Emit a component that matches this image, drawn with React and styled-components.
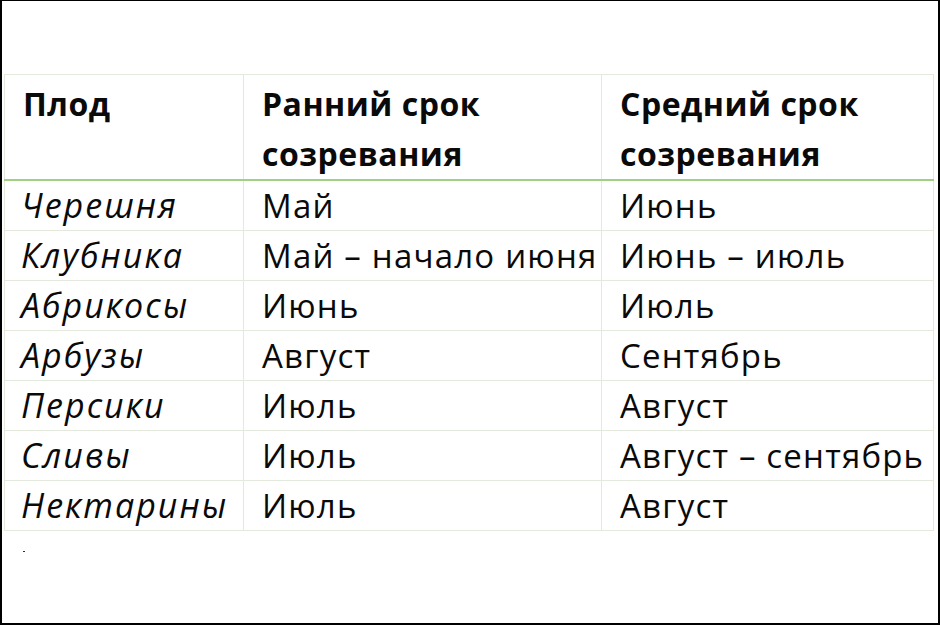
import React from "react";
import styled, { createGlobalStyle } from "styled-components";

const Global = createGlobalStyle`
  html, body { margin: 0; padding: 0; background: #fff; }
  body { width: 940px; height: 626px; overflow: hidden; }
  #root { width: 940px; height: 626px; }
`;

const Frame = styled.div`
  box-sizing: border-box;
  width: 940px;
  height: 625px;
  border-top: 1px solid #000;
  border-left: 2px solid #000;
  border-right: 2px solid #000;
  border-bottom: 2px solid #000;
  padding: 73px 0 0 2px;
  background: #fff;
  font-family: "Open Sans", Lato, sans-serif;
  color: #0a0a0a;
`;

const Table = styled.table`
  border-collapse: collapse;
  table-layout: fixed;
  width: 929px;
`;

const HeadCell = styled.th`
  text-align: left;
  vertical-align: top;
  font-weight: 700;
  font-size: 32px;
  letter-spacing: 0.5px;
  line-height: 50px;
  padding: 4px 10px 0 18px;
  height: 100px;
  box-sizing: border-box;
  border: 1px solid #e3e9dc;
  border-bottom: 2px solid #9fd083;
`;

const Cell = styled.td`
  font-size: ${(p) => (p.$italic ? 34 : 33)}px;
  letter-spacing: ${(p) => (p.$italic ? 2 : 1.2)}px;
  line-height: 49px;
  padding: 0 0 0 ${(p) => (p.$italic ? 16 : 18)}px;
  height: 50px;
  box-sizing: border-box;
  white-space: nowrap;
  border: 1px solid #e3e9dc;
  font-style: ${(p) => (p.$italic ? "italic" : "normal")};
`;

const Dot = styled.div`
  margin: 20px 0 0 19px;
  width: 2px;
  height: 1px;
  background: #333;
`;

const rows = [
  ["Черешня", "Май", "Июнь"],
  ["Клубника", "Май – начало июня", "Июнь – июль"],
  ["Абрикосы", "Июнь", "Июль"],
  ["Арбузы", "Август", "Сентябрь"],
  ["Персики", "Июль", "Август"],
  ["Сливы", "Июль", "Август – сентябрь"],
  ["Нектарины", "Июль", "Август"],
];

export default function App() {
  return (
    <>
      <Global />
      <Frame>
        <Table>
          <colgroup>
            <col style={{ width: 239 }} />
            <col style={{ width: 358 }} />
            <col style={{ width: 332 }} />
          </colgroup>
          <thead>
            <tr>
              <HeadCell>Плод</HeadCell>
              <HeadCell>
                Ранний срок
                <br />
                созревания
              </HeadCell>
              <HeadCell>
                Средний срок
                <br />
                созревания
              </HeadCell>
            </tr>
          </thead>
          <tbody>
            {rows.map((r) => (
              <tr key={r[0]}>
                <Cell $italic>{r[0]}</Cell>
                <Cell>{r[1]}</Cell>
                <Cell>{r[2]}</Cell>
              </tr>
            ))}
          </tbody>
        </Table>
        <Dot />
      </Frame>
    </>
  );
}
